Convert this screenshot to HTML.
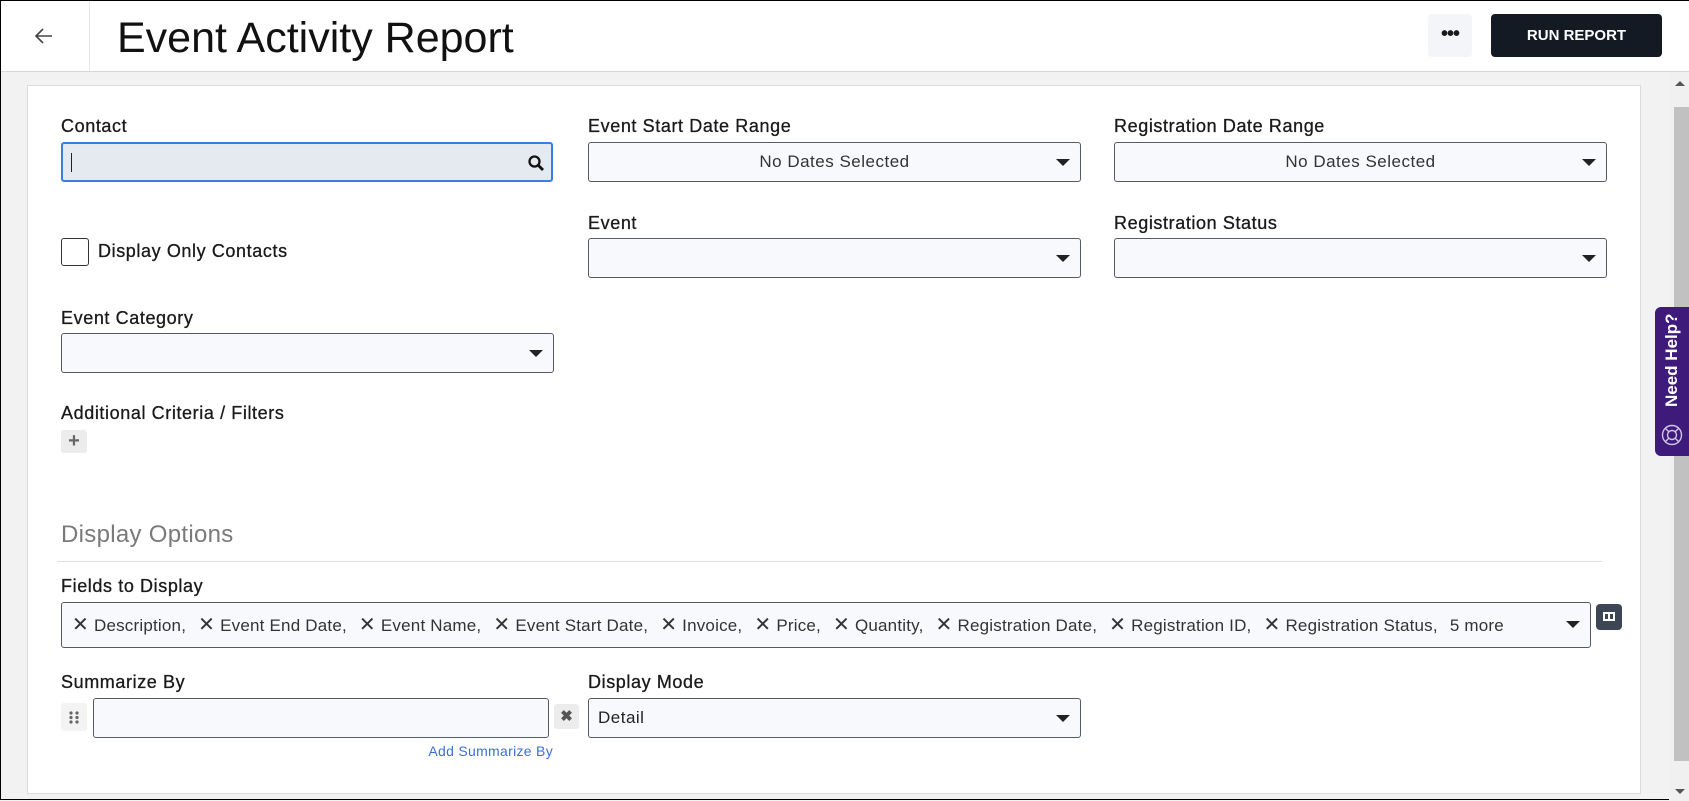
<!DOCTYPE html>
<html><head><meta charset="utf-8"><style>
*{box-sizing:border-box;margin:0;padding:0}
body{width:1689px;height:800px;overflow:hidden;font-family:"Liberation Sans",sans-serif;color:#1a1a1a;background:#f2f2f2;position:relative;border:1px solid #000}
.abs{position:absolute}
.hdr{left:0;top:0;width:1689px;height:71px;background:#fff;border-bottom:1px solid #d8d8d8}
.lbl{position:absolute;font-size:18px;color:#1a1a1a;letter-spacing:0.6px;-webkit-text-stroke:0.3px #1a1a1a}
.inp{position:absolute;height:40px;background:#f7f9fc;border:1px solid #555b66;border-radius:3px;font-size:17px;letter-spacing:0.5px}
.car{position:absolute;right:10px;top:16px;width:0;height:0;border-left:7px solid transparent;border-right:7px solid transparent;border-top:7px solid #222}
.chip{margin-right:12px;white-space:nowrap}
.chip b{font-weight:normal;font-size:20px;margin-right:5px}
</style></head><body>
<div class="abs hdr">
  <svg class="abs" style="left:33px;top:25px" width="20" height="20" viewBox="0 0 20 20"><path d="M18 10H3M9 3L2 10l7 7" fill="none" stroke="#444" stroke-width="1.6"/></svg>
  <div class="abs" style="left:88px;top:0;width:1px;height:70px;background:#e6e6e6"></div>
  <div class="abs" style="left:116px;top:13px;font-size:43px;color:#111">Event Activity Report</div>
  <div class="abs" style="left:1427px;top:13px;width:44px;height:43px;background:#f3f5f8;border-radius:4px;text-align:center;line-height:40px;font-size:20px;letter-spacing:-1px;font-weight:bold">•••</div>
  <div class="abs" style="left:1490px;top:13px;width:171px;height:43px;background:#141a24;border-radius:4px;color:#fff;text-align:center;line-height:43px;font-size:15px;font-weight:bold">RUN REPORT</div>
</div>
<div class="abs" style="left:1668px;top:71px;width:21px;height:729px;background:#f0f0f0"></div>
<div class="abs" style="left:1673px;top:106px;width:15px;height:654px;background:#c1c1c1"></div>
<div class="abs" style="left:1674px;top:80px;border-left:5px solid transparent;border-right:5px solid transparent;border-bottom:5px solid #555"></div>
<div class="abs" style="left:1674px;top:788px;border-left:5px solid transparent;border-right:5px solid transparent;border-top:5px solid #555"></div>
<div class="abs" style="left:26px;top:84px;width:1614px;height:709px;background:#fff;border:1px solid #dcdcdc"></div>

<div class="lbl" style="left:60px;top:115px">Contact</div>
<div class="inp" style="left:60px;top:141px;width:492px;background:#e5e9f0;border:2px solid #3b7de0">
  <div class="abs" style="left:8px;top:9px;width:1px;height:19px;background:#222"></div>
  <svg class="abs" style="right:6px;top:10px" width="18" height="18" viewBox="0 0 18 18"><circle cx="7.5" cy="7.5" r="5" fill="none" stroke="#111" stroke-width="2.3"/><path d="M11 11l5 5" stroke="#111" stroke-width="2.8"/></svg>
</div>
<div class="lbl" style="left:587px;top:115px">Event Start Date Range</div>
<div class="inp" style="left:587px;top:141px;width:493px;text-align:center;line-height:38px;color:#333">No Dates Selected<div class="car"></div></div>
<div class="lbl" style="left:1113px;top:115px">Registration Date Range</div>
<div class="inp" style="left:1113px;top:141px;width:493px;text-align:center;line-height:38px;color:#333">No Dates Selected<div class="car"></div></div>

<div class="abs" style="left:60px;top:237px;width:28px;height:28px;border:1.5px solid #333;border-radius:3px;background:#fff"></div>
<div class="lbl" style="left:97px;top:240px">Display Only Contacts</div>
<div class="lbl" style="left:587px;top:212px">Event</div>
<div class="inp" style="left:587px;top:237px;width:493px"><div class="car"></div></div>
<div class="lbl" style="left:1113px;top:212px">Registration Status</div>
<div class="inp" style="left:1113px;top:237px;width:493px"><div class="car"></div></div>

<div class="lbl" style="left:60px;top:307px">Event Category</div>
<div class="inp" style="left:60px;top:332px;width:493px"><div class="car"></div></div>

<div class="lbl" style="left:60px;top:402px">Additional Criteria / Filters</div>
<div class="abs" style="left:60px;top:429px;width:26px;height:23px;background:#ececec;border-radius:3px;text-align:center;line-height:22px;font-size:20px;font-weight:bold;color:#666">+</div>

<div class="abs" style="left:60px;top:520px;font-size:24px;color:#7a7a7a;letter-spacing:0.3px">Display Options</div>
<div class="abs" style="left:56px;top:560px;width:1545px;height:1px;background:#dde0ea"></div>

<div class="lbl" style="left:60px;top:575px">Fields to Display</div>
<div class="inp" style="left:60px;top:601px;width:1530px;height:46px;line-height:44px;padding-left:10px;color:#333;white-space:nowrap;overflow:hidden;letter-spacing:0.2px">
<span class="chip"><b>✕</b>Description,</span><span class="chip"><b>✕</b>Event End Date,</span><span class="chip"><b>✕</b>Event Name,</span><span class="chip"><b>✕</b>Event Start Date,</span><span class="chip"><b>✕</b>Invoice,</span><span class="chip"><b>✕</b>Price,</span><span class="chip"><b>✕</b>Quantity,</span><span class="chip"><b>✕</b>Registration Date,</span><span class="chip"><b>✕</b>Registration ID,</span><span class="chip"><b>✕</b>Registration Status,</span><span>5 more</span>
<div class="car" style="top:18px"></div></div>
<div class="abs" style="left:1595px;top:603px;width:26px;height:26px;background:#3d4654;border-radius:4px"><div class="abs" style="left:7px;top:8px;width:12px;height:9px;border:2px solid #fff;background:#3d4654"></div><div class="abs" style="left:12px;top:8px;width:2px;height:9px;background:#fff"></div></div>

<div class="lbl" style="left:60px;top:671px">Summarize By</div>
<div class="abs" style="left:60px;top:702px;width:26px;height:28px;background:#f3f3f3;border-radius:3px"><svg class="abs" style="left:8px;top:8px" width="10" height="13" viewBox="0 0 10 13" fill="#666"><circle cx="2" cy="2" r="1.6"/><circle cx="8" cy="2" r="1.6"/><circle cx="2" cy="6.5" r="1.6"/><circle cx="8" cy="6.5" r="1.6"/><circle cx="2" cy="11" r="1.6"/><circle cx="8" cy="11" r="1.6"/></svg></div>
<div class="inp" style="left:92px;top:697px;width:456px"></div>
<div class="abs" style="left:553px;top:703px;width:25px;height:25px;background:#ececec;border-radius:3px;text-align:center;line-height:25px;font-size:15px;color:#555;font-weight:bold">✖</div>
<div class="lbl" style="left:587px;top:671px">Display Mode</div>
<div class="inp" style="left:587px;top:697px;width:493px;line-height:38px;padding-left:9px;color:#222">Detail<div class="car"></div></div>
<div class="abs" style="left:380px;top:742px;width:172px;text-align:right;font-size:14px;color:#3b6fd8;letter-spacing:0.3px">Add Summarize By</div>

<div class="abs" style="left:1654px;top:306px;width:35px;height:149px;background:#3e1a7a;border-radius:6px 0 0 6px">
  <div class="abs" style="left:-28px;top:45px;width:90px;height:20px;transform:rotate(-90deg);color:#fff;font-weight:bold;font-size:17px;white-space:nowrap;text-align:center">Need Help?</div>
  <svg class="abs" style="left:6px;top:117px" width="22" height="22" viewBox="0 0 22 22" fill="none" stroke="#cfc6e6" stroke-width="1.4"><circle cx="11" cy="11" r="9.5"/><circle cx="11" cy="11" r="4.5"/><path d="M4.5 4.5l3.3 3.3M17.5 4.5l-3.3 3.3M4.5 17.5l3.3-3.3M17.5 17.5l-3.3-3.3"/></svg>
</div>
</body></html>
